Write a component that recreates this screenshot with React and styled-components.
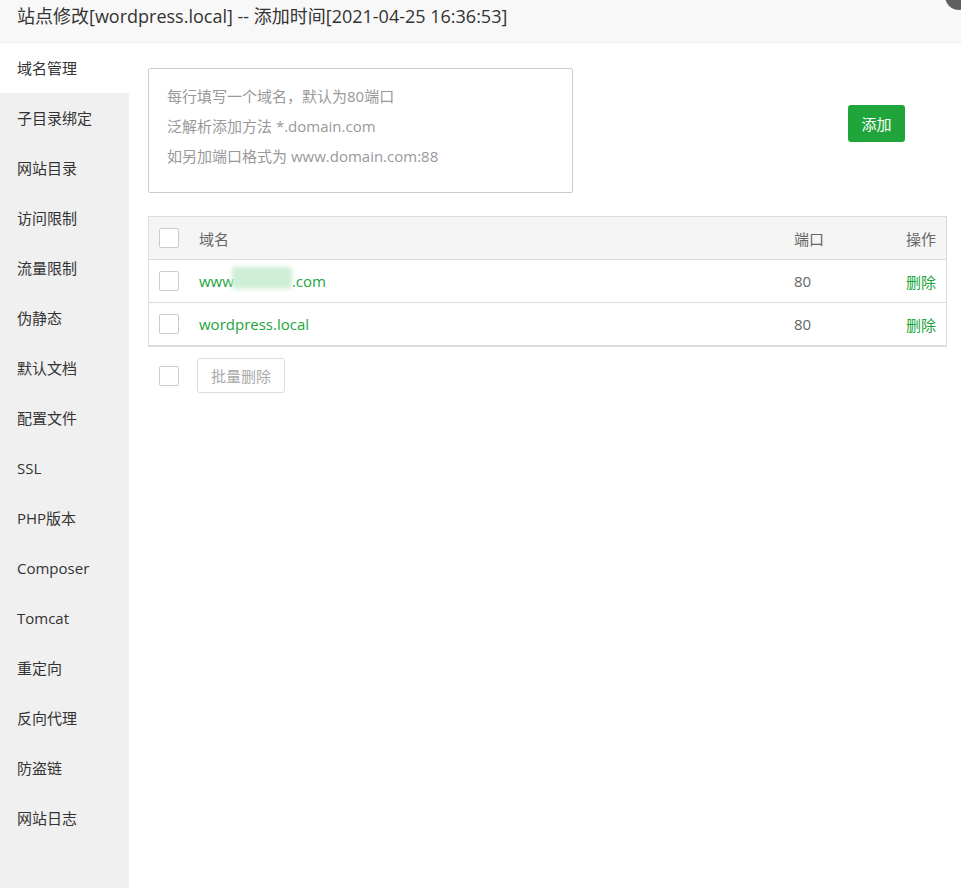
import React from 'react';
import styled, { createGlobalStyle } from 'styled-components';

const GlobalStyle = createGlobalStyle`
    html, body {
        margin: 0;
        padding: 0;
        background: #fff;
        font-family: "Open Sans", "Noto Sans CJK SC", sans-serif;
        color: #333;
    }
`;

const Layer = styled.div`
    position: relative;
    width: 961px;
    height: 888px;
    overflow: hidden;
    display: flex;
    flex-direction: column;
`;

const TitleBar = styled.div`
    height: 42px;
    line-height: 33px;
    padding-left: 17px;
    background: #f8f8f8;
    border-bottom: 1px solid #eee;
    font-size: 18px;
    color: #333;
    flex-shrink: 0;
`;

const CloseDot = styled.span`
    position: absolute;
    right: -12px;
    top: -18px;
    width: 28px;
    height: 28px;
    border-radius: 50%;
    background: #5f5f5f;
`;

const Body = styled.div`
    display: flex;
    flex: 1;
`;

const Sidebar = styled.ul`
    list-style: none;
    margin: 0;
    padding: 0;
    width: 129px;
    background: #f0f0f0;
    flex-shrink: 0;
`;

const NavItem = styled.li`
    height: 50px;
    line-height: 50px;
    padding-left: 17px;
    font-size: 15px;
    color: #333;
    background: ${p => (p.active ? '#fff' : 'transparent')};
`;

const Content = styled.div`
    flex: 1;
    padding: 25px 14px 0 19px;
`;

const TopRow = styled.div`
    display: flex;
    align-items: flex-start;
`;

const Placeholder = styled.div`
    box-sizing: border-box;
    width: 425px;
    height: 125px;
    padding: 12px 0 0 18px;
    border: 1px solid #ccc;
    border-radius: 2px;
    font-size: 15px;
    line-height: 30px;
    color: #999;
`;

const AddButton = styled.button`
    margin: 37px 0 0 275px;
    width: 57px;
    height: 37px;
    border: none;
    border-radius: 3px;
    background: #20a53a;
    color: #fff;
    font-family: inherit;
    font-size: 15px;
    padding: 0;
`;

const Table = styled.div`
    margin-top: 23px;
    border: 1px solid #ddd;
    border-bottom-width: 2px;
`;

const Row = styled.div`
    display: flex;
    align-items: center;
    height: 42px;
    padding: 0 10px;
    background: ${p => (p.head ? '#f5f5f5' : '#fff')};
    border-top: ${p => (p.head ? 'none' : '1px solid #ddd')};
    font-size: 15px;
    color: #666;
`;

const Check = styled.span`
    display: inline-block;
    width: 18px;
    height: 18px;
    border: 1px solid #ccc;
    border-radius: 2px;
    background: #fff;
    flex-shrink: 0;
`;

const DomainCell = styled.div`
    flex: 1;
    margin-left: 20px;
    color: ${p => (p.link ? '#20a53a' : '#666')};
    display: flex;
    align-items: center;
`;

const Blur = styled.span`
    display: inline-block;
    width: 60px;
    height: 22px;
    margin: -6px 0 0 -2px;
    background: #cfeed6;
    filter: blur(2px);
`;

const PortCell = styled.div`
    width: 80px;
`;

const ActionCell = styled.div`
    width: 62px;
    text-align: right;
    color: ${p => (p.link ? '#20a53a' : '#666')};
`;

const Footer = styled.div`
    display: flex;
    align-items: center;
    gap: 18px;
    margin-top: 11px;
    padding-left: 11px;
`;

const GhostButton = styled.button`
    height: 35px;
    padding: 0 13px;
    border: 1px solid #ddd;
    border-radius: 3px;
    background: #fff;
    color: #aaa;
    font-family: inherit;
    font-size: 15px;
`;

const navs = [
    '域名管理', '子目录绑定', '网站目录', '访问限制', '流量限制', '伪静态',
    '默认文档', '配置文件', 'SSL', 'PHP版本', 'Composer', 'Tomcat',
    '重定向', '反向代理', '防盗链', '网站日志'
];

const App = () => {
    return (
        <>
            <GlobalStyle />
            <Layer>
                <TitleBar>站点修改[wordpress.local] -- 添加时间[2021-04-25 16:36:53]</TitleBar>
                <CloseDot />
                <Body>
                    <Sidebar>
                        {navs.map((n, i) => (
                            <NavItem key={n} active={i === 0}>{n}</NavItem>
                        ))}
                    </Sidebar>
                    <Content>
                        <TopRow>
                            <Placeholder>
                                <div>每行填写一个域名，默认为80端口</div>
                                <div>泛解析添加方法 *.domain.com</div>
                                <div>如另加端口格式为 www.domain.com:88</div>
                            </Placeholder>
                            <AddButton>添加</AddButton>
                        </TopRow>
                        <Table>
                            <Row head>
                                <Check />
                                <DomainCell>域名</DomainCell>
                                <PortCell>端口</PortCell>
                                <ActionCell>操作</ActionCell>
                            </Row>
                            <Row>
                                <Check />
                                <DomainCell link>www<Blur />.com</DomainCell>
                                <PortCell>80</PortCell>
                                <ActionCell link>删除</ActionCell>
                            </Row>
                            <Row>
                                <Check />
                                <DomainCell link>wordpress.local</DomainCell>
                                <PortCell>80</PortCell>
                                <ActionCell link>删除</ActionCell>
                            </Row>
                        </Table>
                        <Footer>
                            <Check />
                            <GhostButton>批量删除</GhostButton>
                        </Footer>
                    </Content>
                </Body>
            </Layer>
        </>
    );
};

export default App;
